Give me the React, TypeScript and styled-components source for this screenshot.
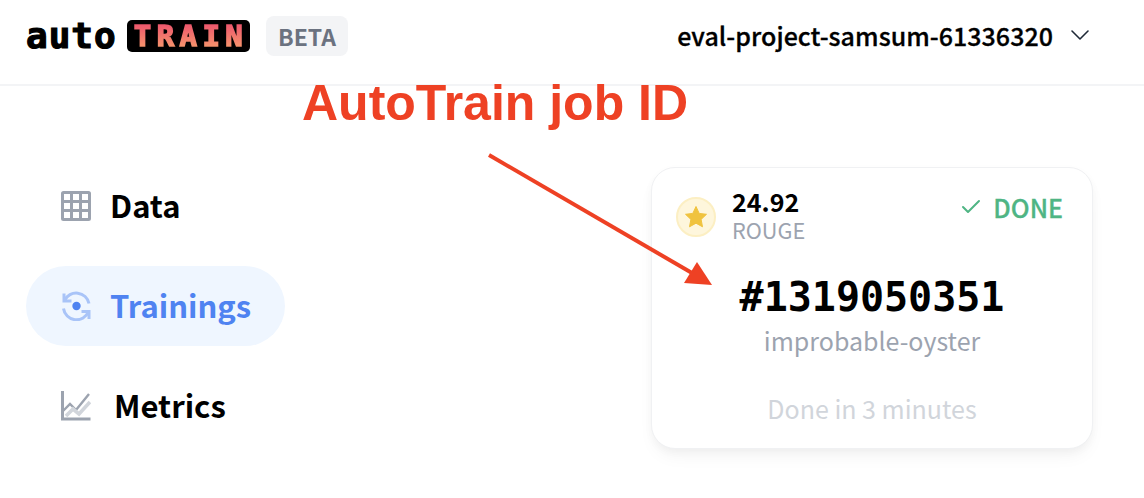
import styled, { createGlobalStyle } from "styled-components";
import { ChevronDown, Check } from "lucide-react";

const SANS = `"Noto Sans CJK JP", "Noto Sans", sans-serif`;

export default function App() {
  return (
    <Page>
      <GlobalStyle />
      <Header>
        <Brand>
          <Auto>auto</Auto>
          <TrainBadge>
            <TrainText>TRAIN</TrainText>
          </TrainBadge>
          <Beta>BETA</Beta>
        </Brand>
        <Project>
          <ProjectName>eval-project-samsum-61336320</ProjectName>
          <ChevronDown size={32} strokeWidth={1.2} color="#1f2937" />
        </Project>
      </Header>
      <Body>
        <Sidebar>
          <NavItem>
            <GridIcon />
            <NavLabel>Data</NavLabel>
          </NavItem>
          <NavItem $active>
            <TrainingIcon />
            <NavLabel>Trainings</NavLabel>
          </NavItem>
          <NavItem $gap={23}>
            <MetricsIcon />
            <NavLabel>Metrics</NavLabel>
          </NavItem>
        </Sidebar>
        <Card>
          <CardTop>
            <Score>
              <StarCircle>
                <StarIcon />
              </StarCircle>
              <ScoreText>
                <ScoreValue>24.92</ScoreValue>
                <ScoreMetric>ROUGE</ScoreMetric>
              </ScoreText>
            </Score>
            <Status>
              <Check size={24} strokeWidth={2} color="#4fb584" />
              <StatusText>DONE</StatusText>
            </Status>
          </CardTop>
          <JobId>#1319050351</JobId>
          <JobName>improbable-oyster</JobName>
          <Duration>Done in 3 minutes</Duration>
        </Card>
      </Body>
      <Annotation>AutoTrain job ID</Annotation>
      <ArrowSvg width="240" height="145" viewBox="0 0 240 145">
        <line x1="2" y1="2" x2="205" y2="120" stroke="#ee4124" strokeWidth="4" />
        <polygon points="225,132 197,130 210,109" fill="#ee4124" />
      </ArrowSvg>
    </Page>
  );
}

function GridIcon() {
  return (
    <IconBox>
      <svg width="30" height="30" viewBox="0 0 30 30">
        <rect x="1.5" y="1.5" width="27" height="27" rx="1" fill="none" stroke="#9ca3af" strokeWidth="3" />
        <path d="M10.5 1v28M19.5 1v28M1 10.5h28M1 19.5h28" stroke="#9ca3af" strokeWidth="3" />
      </svg>
    </IconBox>
  );
}

function TrainingIcon() {
  return (
    <IconBox>
      <svg width="30" height="30" viewBox="0 0 30 30" fill="none">
        <circle cx="15.5" cy="15" r="4.2" fill="#4f83f1" />
        <path d="M3.5 9.5 A13 13 0 0 1 28 12.5" stroke="#a9c4f8" strokeWidth="3" />
        <path d="M27.5 20.5 A13 13 0 0 1 2.5 17.5" stroke="#a9c4f8" strokeWidth="3" />
        <path d="M3 2.5v7.5h7.5" stroke="#a9c4f8" strokeWidth="3" />
        <path d="M28 28v-7.5h-7.5" stroke="#a9c4f8" strokeWidth="3" />
      </svg>
    </IconBox>
  );
}

function MetricsIcon() {
  return (
    <IconBox>
      <svg width="30" height="30" viewBox="0 0 30 30" fill="none">
        <path d="M1.5 0v28h28" stroke="#9ca3af" strokeWidth="3" />
        <path d="M2 20l7-7 6 6L28 3" stroke="#9ca3af" strokeWidth="2.4" />
        <path d="M5 25l7-7 6 5 11-12" stroke="#d1d5db" strokeWidth="3.6" />
      </svg>
    </IconBox>
  );
}

function StarIcon() {
  return (
    <svg width="24" height="24" viewBox="0 0 24 24">
      <path
        d="M12 1.5l3.2 6.9 7.3.9-5.4 5.1 1.4 7.4L12 18.2l-6.5 3.6 1.4-7.4L1.5 9.3l7.3-.9z"
        fill="#f0c33f"
        stroke="#f0c33f"
        strokeLinejoin="round"
      />
    </svg>
  );
}

const GlobalStyle = createGlobalStyle`
  html, body {
    margin: 0;
    background: #fff;
    font-family: ${SANS};
  }
`;

const Page = styled.div`
  position: relative;
  width: 1144px;
  height: 498px;
  overflow: hidden;
  background: #fff;
`;

const Header = styled.header`
  height: 84px;
  padding: 0 48px 0 26px;
  border-bottom: 2px solid #f3f4f6;
  display: flex;
  align-items: flex-start;
  justify-content: space-between;
`;

const Brand = styled.div`
  display: flex;
  align-items: center;
  height: 72px;
`;

const Auto = styled.span`
  font-family: "DejaVu Sans Mono", monospace;
  font-weight: 700;
  font-size: 36px;
  line-height: 40px;
  letter-spacing: 1px;
  color: #000;
  -webkit-text-stroke: 1.2px #000;
  width: 101px;
`;

const TrainBadge = styled.div`
  width: 123px;
  height: 32px;
  border-radius: 5px;
  background: #000;
  display: flex;
  align-items: center;
  justify-content: center;
`;

const TrainText = styled.span`
  font-family: "DejaVu Sans Mono", monospace;
  font-weight: 700;
  font-size: 29px;
  line-height: 26px;
  letter-spacing: 5.4px;
  margin-right: -5px;
  background: linear-gradient(180deg, #ee5a6d 10%, #f6926c 90%);
  -webkit-background-clip: text;
  background-clip: text;
  color: transparent;
  -webkit-text-stroke: 1.6px transparent;
`;

const Beta = styled.span`
  margin-left: 16px;
  width: 82px;
  height: 40px;
  border-radius: 8px;
  background: #f3f4f6;
  color: #6b7280;
  font-size: 23px;
  font-weight: 700;
  line-height: 40px;
  text-align: center;
`;

const Project = styled.div`
  height: 70px;
  display: flex;
  align-items: center;
  gap: 11px;
`;

const ProjectName = styled.span`
  font-size: 25px;
  font-weight: 500;
  letter-spacing: 0.03px;
  color: #000;
  -webkit-text-stroke: 0.3px #000;
`;

const Body = styled.main`
  display: flex;
  align-items: flex-start;
  padding: 80px 0 0 26px;
`;

const Sidebar = styled.nav`
  width: 259px;
  display: flex;
  flex-direction: column;
  gap: 20px;
`;

const NavItem = styled.div<{ $active?: boolean; $gap?: number }>`
  height: 80px;
  border-radius: 40px;
  padding-left: 35px;
  display: flex;
  align-items: center;
  gap: ${(p) => p.$gap ?? 19}px;
  background: ${(p) => (p.$active ? "#eff6ff" : "transparent")};
  color: ${(p) => (p.$active ? "#4f83f1" : "#000")};
`;

const IconBox = styled.span`
  width: 30px;
  height: 30px;
  display: flex;
`;

const NavLabel = styled.span`
  font-size: 31px;
  font-weight: 700;
  line-height: 40px;
  margin-top: -2px;
`;

const Card = styled.section`
  width: 442px;
  height: 282px;
  box-sizing: border-box;
  margin: 1px 0 0 366px;
  padding: 20px 29px 0;
  background: #fff;
  border: 1px solid #f0f1f3;
  border-radius: 24px;
  box-shadow: 0 10px 18px -4px rgba(0, 0, 0, 0.05), 0 3px 8px rgba(0, 0, 0, 0.03);
  display: flex;
  flex-direction: column;
  align-items: center;
`;

const CardTop = styled.div`
  align-self: stretch;
  display: flex;
  justify-content: space-between;
  align-items: flex-start;
`;

const Score = styled.div`
  display: flex;
  align-items: center;
  gap: 16px;
  margin-left: -5px;
`;

const StarCircle = styled.div`
  width: 40px;
  height: 40px;
  margin-top: 2px;
  box-sizing: border-box;
  border-radius: 50%;
  background: #fef6dc;
  border: 2px solid #fcefc3;
  display: flex;
  align-items: center;
  justify-content: center;
`;

const ScoreText = styled.div`
  display: flex;
  flex-direction: column;
  margin-top: -2px;
`;

const ScoreValue = styled.span`
  font-size: 25px;
  font-weight: 700;
  line-height: 30px;
  color: #000;
`;

const ScoreMetric = styled.span`
  font-size: 21.7px;
  line-height: 28px;
  color: #9ca3af;
`;

const Status = styled.div`
  display: flex;
  align-items: center;
  gap: 10px;
  height: 38px;
`;

const StatusText = styled.span`
  font-size: 25px;
  font-weight: 500;
  color: #4fb584;
  -webkit-text-stroke: 0.3px #4fb584;
`;

const JobId = styled.div`
  margin-top: 29px;
  font-family: "DejaVu Sans Mono", monospace;
  font-weight: 700;
  font-size: 40px;
  line-height: 49px;
  color: #000;
`;

const JobName = styled.div`
  font-size: 25px;
  line-height: 36px;
  color: #9ca3af;
`;

const Duration = styled.div`
  margin-top: 32px;
  font-size: 25px;
  line-height: 36px;
  color: #d1d5db;
`;

const Annotation = styled.div`
  position: absolute;
  left: 302px;
  top: 75px;
  font-family: "Liberation Sans", Arial, sans-serif;
  font-weight: 700;
  font-size: 50px;
  line-height: 56px;
  color: #ee4124;
  white-space: nowrap;
`;

const ArrowSvg = styled.svg`
  position: absolute;
  left: 487px;
  top: 153px;
`;
